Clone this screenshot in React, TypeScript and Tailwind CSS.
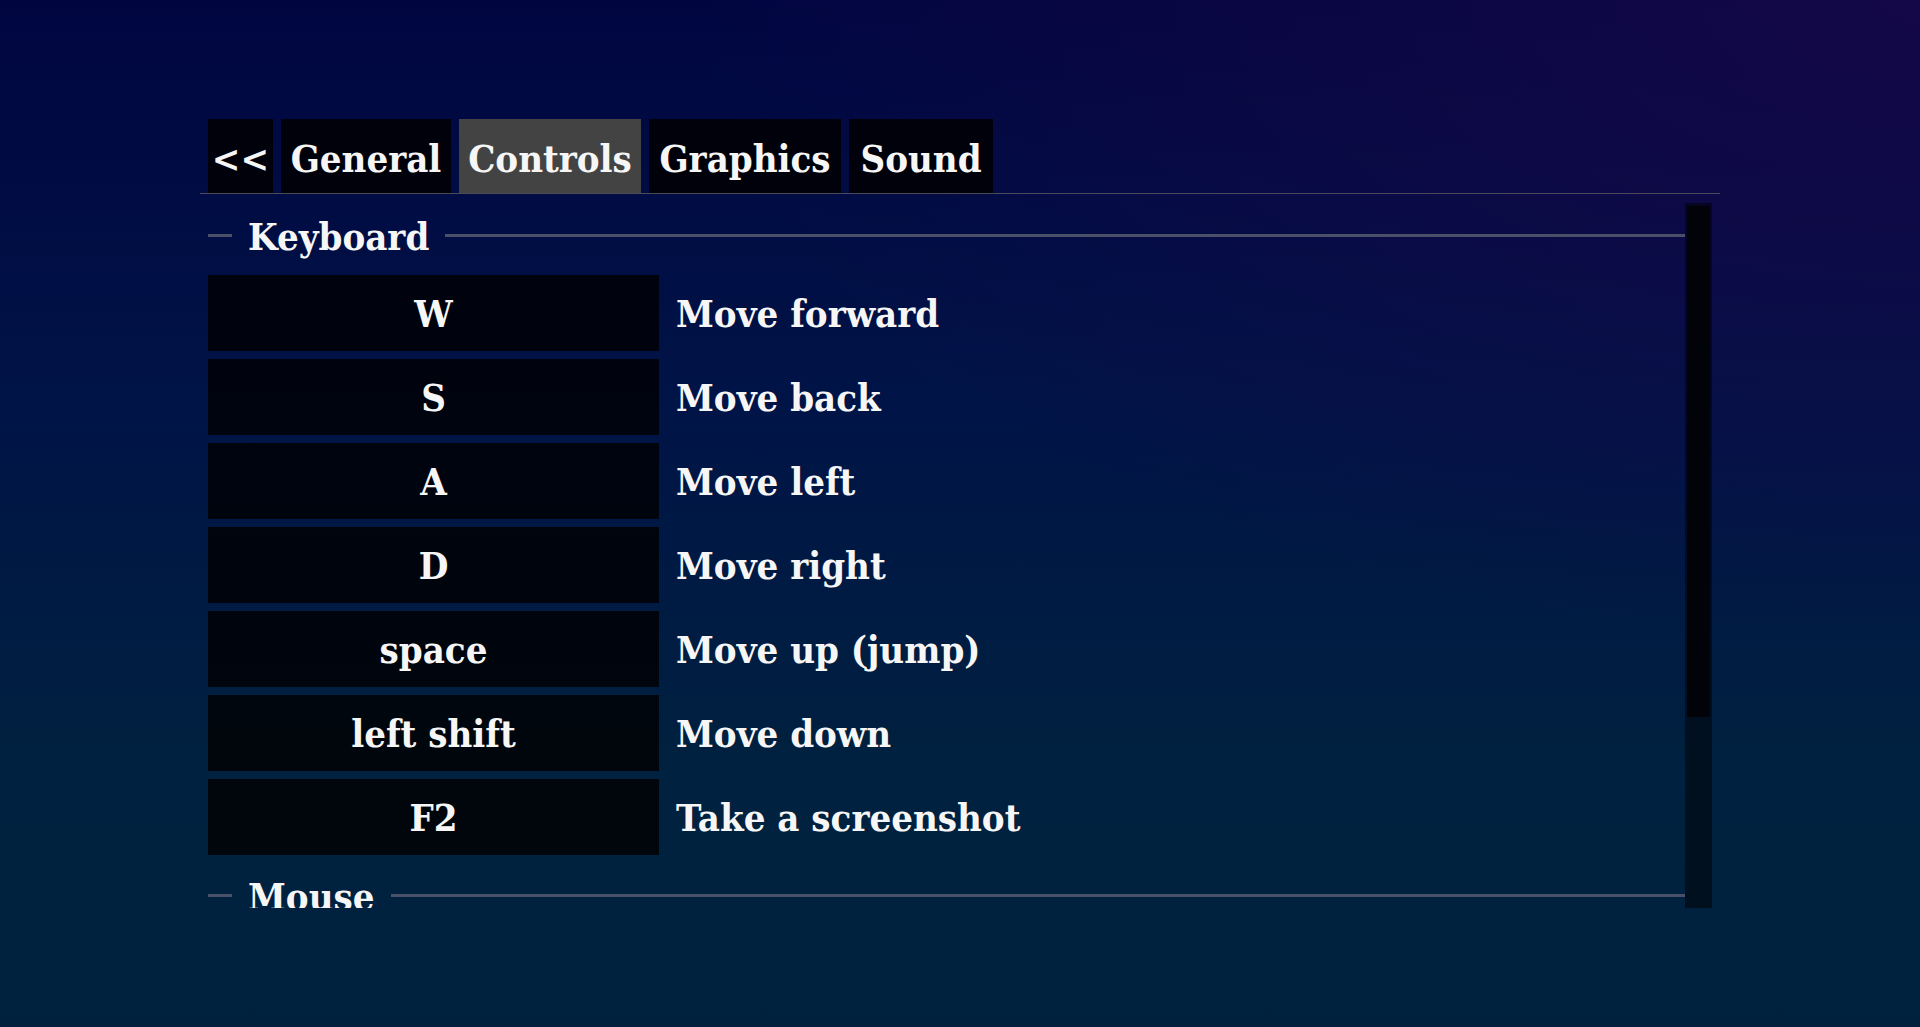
import React from 'react'

const tabs = [
  { label: '<<', w: 'w-[65px]', active: false },
  { label: 'General', w: 'w-[170px]', active: false },
  { label: 'Controls', w: 'w-[182px]', active: true },
  { label: 'Graphics', w: 'w-[192px]', active: false },
  { label: 'Sound', w: 'w-[144px]', active: false },
]

const keyboard = [
  { key: 'W', action: 'Move forward' },
  { key: 'S', action: 'Move back' },
  { key: 'A', action: 'Move left' },
  { key: 'D', action: 'Move right' },
  { key: 'space', action: 'Move up (jump)' },
  { key: 'left shift', action: 'Move down' },
  { key: 'F2', action: 'Take a screenshot' },
]

function Legend({ title }: { title: string }) {
  return (
    <div className="flex items-center h-16 shrink-0">
      <div className="w-[24px] h-[3px] bg-[#4a5068]" />
      <span className="px-4 leading-none pt-1">{title}</span>
      <div className="flex-1 h-[3px] bg-[#4a5068]" />
    </div>
  )
}

export default function App() {
  return (
    <div
      className="w-full h-[1027px] overflow-hidden text-[#f6f6f6] text-[38px] font-bold bg-[radial-gradient(ellipse_at_100%_0%,rgba(22,8,72,0.9)_0%,rgba(10,6,64,0)_45%),linear-gradient(180deg,#000540_0%,#001447_40%,#00213f_75%,#00213e_100%)]"
      style={{ fontFamily: '"DejaVu Serif Condensed", "DejaVu Serif", serif' }}
    >
      <div className="pt-[119px] pl-[200px]">
        <div className="w-[1520px]">
          {/* tab bar */}
          <div className="flex gap-2 pl-2 border-b border-[#4a4a58]">
            {tabs.map((t) => (
              <div
                key={t.label}
                className={`${t.w} h-[74px] pt-1 flex items-center justify-center whitespace-nowrap ${t.active ? 'bg-[#434343]' : 'bg-black/85'}`}
              >
                {t.label}
              </div>
            ))}
          </div>

          {/* scroll area */}
          <div className="flex mt-[9px] h-[705px] w-[1512px]">
            <div className="flex-1 overflow-hidden pl-2 flex flex-col gap-2">
              <Legend title="Keyboard" />
              {keyboard.map((row) => (
                <div key={row.key} className="flex items-center h-[76px] shrink-0">
                  <div className="w-[451px] h-full bg-black/80 flex items-center justify-center">
                    {row.key}
                  </div>
                  <div className="pl-[17px]">{row.action}</div>
                </div>
              ))}
              <Legend title="Mouse" />
            </div>
            <div className="w-[27px] h-full bg-black/50 p-[2px] pt-[3px]">
              <div className="h-[511px] bg-[#020308]" />
            </div>
          </div>
        </div>
      </div>
    </div>
  )
}
